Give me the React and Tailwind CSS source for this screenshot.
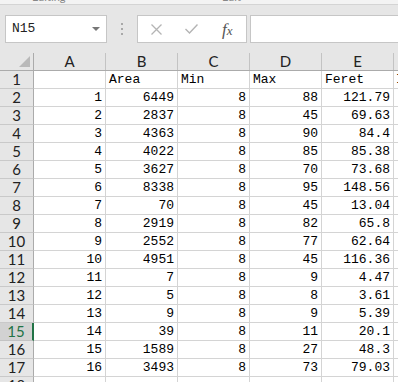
import React from "react";

const rows = [
  ["", "Area", "Min", "Max", "Feret", "I"],
  [1, 6449, 8, 88, "121.79"],
  [2, 2837, 8, 45, "69.63"],
  [3, 4363, 8, 90, "84.4"],
  [4, 4022, 8, 85, "85.38"],
  [5, 3627, 8, 70, "73.68"],
  [6, 8338, 8, 95, "148.56"],
  [7, 70, 8, 45, "13.04"],
  [8, 2919, 8, 82, "65.8"],
  [9, 2552, 8, 77, "62.64"],
  [10, 4951, 8, 45, "116.36"],
  [11, 7, 8, 9, "4.47"],
  [12, 5, 8, 8, "3.61"],
  [13, 9, 8, 9, "5.39"],
  [14, 39, 8, 11, "20.1"],
  [15, 1589, 8, 27, "48.3"],
  [16, 3493, 8, 73, "79.03"],
  ["", "", "", "", "", ""],
];

const mono = { fontFamily: '"Liberation Mono", "Noto Sans CJK SC", monospace' };
const hdrFont = { fontFamily: 'Lato, "Liberation Sans", sans-serif' };

export default function App() {
  return (
    <div className="w-[398px] h-[382px] overflow-hidden bg-[#e6e6e6] relative">
      {/* top ribbon remnant */}
      <div className="h-[5px] bg-[#f3f3f3] border-b border-[#d4d4d4] overflow-hidden relative text-[11px] text-[#888]" style={hdrFont}>
        <span className="absolute left-[32px] top-[-11px]">Editing</span>
        <span className="absolute left-[222px] top-[-11px]">Edit</span>
      </div>
      {/* formula bar */}
      <div className="h-[48px] flex items-start pt-[10px]">
        <div className="ml-[5px] w-[102px] h-[28px] bg-white border border-[#c6c6c6] flex items-center justify-between pl-[6px] pr-[6px]">
          <span className="text-[13px] text-[#222]" style={mono}>N15</span>
          <svg width="8" height="5" viewBox="0 0 8 5"><path d="M0 0 L8 0 L4 4 Z" fill="#777" /></svg>
        </div>
        <div className="w-[30px] h-[28px] flex flex-col items-center justify-center gap-[3px]">
          <span className="w-[2px] h-[2px] bg-[#a8a8a8]" />
          <span className="w-[2px] h-[2px] bg-[#a8a8a8]" />
          <span className="w-[2px] h-[2px] bg-[#a8a8a8]" />
        </div>
        <div className="w-[110px] h-[28px] bg-white border border-[#c6c6c6] flex items-center">
          <svg className="ml-[13px]" width="11" height="11" viewBox="0 0 11 11"><path d="M0.5 0.5 L10.5 10.5 M10.5 0.5 L0.5 10.5" stroke="#b4b4b4" strokeWidth="1.3" /></svg>
          <svg className="ml-[23px]" width="13" height="10" viewBox="0 0 13 10"><path d="M0.5 5 L4.5 9 L12.5 0.5" stroke="#b4b4b4" strokeWidth="1.4" fill="none" /></svg>
          <span className="ml-[24px] text-[17px] italic text-[#555] leading-none" style={{ fontFamily: '"Liberation Serif", serif' }}>f<span className="text-[13px]">x</span></span>
        </div>
        <div className="ml-[3px] flex-1 h-[28px] bg-white border border-[#c6c6c6] border-r-0" />
      </div>
      {/* column headers */}
      <div className="flex h-[18px] border-b border-[#ababab] text-[15px] text-[#222]" style={hdrFont}>
        <div className="w-[34px] border-r border-[#ababab] relative shrink-0">
          <svg className="absolute right-[3px] bottom-[3px]" width="11" height="11" viewBox="0 0 11 11"><path d="M11 0 L11 11 L0 11 Z" fill="#b9b9b9" /></svg>
        </div>
        {["A", "B", "C", "D", "E"].map((c) => (
          <div key={c} className="w-[72px] shrink-0 border-r border-[#c3c3c3] flex items-center justify-center leading-none">{c}</div>
        ))}
        <div className="flex-1" />
      </div>
      {/* rows */}
      {rows.map((r, i) => {
        const sel = i === 14;
        return (
          <div key={i} className="flex h-[18px]">
            <div
              className={
                "w-[34px] shrink-0 border-b border-r flex items-center justify-center text-[15px] leading-none relative " +
                (sel ? "bg-[#d2d2d2] text-[#217346] border-b-[#c3c3c3] border-r-[#217346] border-r-2 w-[34px]" : "bg-[#e6e6e6] text-[#222] border-[#c9c9c9] border-r-[#ababab]")
              }
              style={hdrFont}
            >
              {i < 17 ? i + 1 : 18}
            </div>
            {[0, 1, 2, 3, 4].map((j) => (
              <div
                key={j}
                className={
                  "w-[72px] shrink-0 bg-white border-b border-r border-[#d4d4d4] flex items-end pb-[1px] px-[3px] text-[13px] leading-[14px] text-black " +
                  (i === 0 ? "justify-start" : "justify-end")
                }
                style={mono}
              >
                {r[j]}
              </div>
            ))}
            <div className="flex-1 bg-white border-b border-[#d4d4d4] flex items-end pb-[1px] pl-[2px] text-[13px] leading-[14px] text-black overflow-hidden" style={mono}>
              {r[5] || ""}
            </div>
          </div>
        );
      })}
    </div>
  );
}
